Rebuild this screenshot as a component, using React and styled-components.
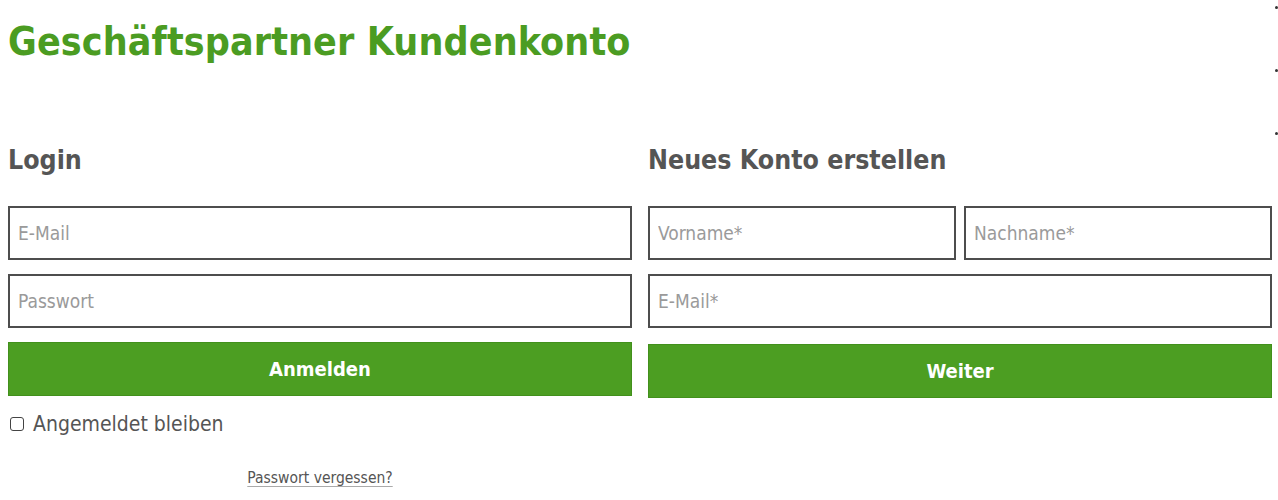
import React from 'react'
import styled, { createGlobalStyle } from 'styled-components'

const Global = createGlobalStyle`
  body {
    margin: 0;
    background: #fff;
    font-family: 'DejaVu Sans Condensed', 'Liberation Sans Narrow', 'Open Sans', sans-serif;
    color: #555;
  }
`

const Page = styled.div`
  position: relative;
  width: 1278px;
  height: 500px;
  overflow: hidden;
  padding: 0 6px 0 8px;
  box-sizing: border-box;
`

const Title = styled.h1`
  margin: 0;
  padding-top: 19px;
  height: 100px;
  box-sizing: border-box;
  font-size: 39px;
  font-weight: 700;
  color: #4b9c22;
  letter-spacing: 0.1px;
  line-height: 46px;
`

const Columns = styled.div`
  display: grid;
  grid-template-columns: 1fr 1fr;
  column-gap: 16px;
`

const Column = styled.section`
  display: flex;
  flex-direction: column;
`

const Heading = styled.h2`
  margin: 42px 0 0;
  height: 64px;
  font-size: 26.5px;
  font-weight: 700;
  color: #555;
  line-height: 36px;
`

const Row = styled.div`
  display: flex;
  gap: 8px;
  margin-bottom: ${p => p.$mb || 14}px;
`

const Input = styled.input`
  flex: 1;
  min-width: 0;
  height: 54px;
  box-sizing: border-box;
  border: 2px solid #4d4d4d;
  border-radius: 0;
  padding: 0 8px;
  font-family: inherit;
  font-size: 19px;
  color: #555;
  outline: none;
  &::placeholder {
    color: #9a9a9a;
  }
`

const Button = styled.button`
  height: 54px;
  margin-top: ${p => p.$mt || 0}px;
  border: 1px solid #42901c;
  background: #4c9e22;
  color: #fff;
  font-family: inherit;
  font-size: 20px;
  font-weight: 700;
  cursor: pointer;
`

const Remember = styled.label`
  display: flex;
  align-items: center;
  gap: 9px;
  margin-top: 16px;
  padding-left: 2px;
  font-size: 21px;
  color: #555;
`

const Box = styled.span`
  width: 14px;
  height: 14px;
  box-sizing: border-box;
  border: 1.5px solid #444;
  border-radius: 3px;
`

const Forgot = styled.a`
  align-self: center;
  margin-top: 33px;
  font-size: 15.5px;
  color: #555;
  text-decoration: underline;
  text-decoration-color: #aaa;
  text-underline-offset: 3px;
`

const Dots = styled.div`
  position: absolute;
  right: 0;
  top: 6px;
  display: flex;
  flex-direction: column;
  gap: 60px;
`

const Dot = styled.span`
  width: 3px;
  height: 3px;
  border-radius: 50%;
  background: #333;
`

export default function App() {
  return (
    <>
      <Global />
      <Page>
        <Title>Geschäftspartner Kundenkonto</Title>
        <Columns>
          <Column>
            <Heading>Login</Heading>
            <Row><Input placeholder="E-Mail" /></Row>
            <Row><Input type="password" placeholder="Passwort" /></Row>
            <Button>Anmelden</Button>
            <Remember><Box />Angemeldet bleiben</Remember>
            <Forgot href="#">Passwort vergessen?</Forgot>
          </Column>
          <Column>
            <Heading>Neues Konto erstellen</Heading>
            <Row>
              <Input placeholder="Vorname*" />
              <Input placeholder="Nachname*" />
            </Row>
            <Row><Input placeholder="E-Mail*" /></Row>
            <Button $mt={2}>Weiter</Button>
          </Column>
        </Columns>
        <Dots><Dot /><Dot /><Dot /></Dots>
      </Page>
    </>
  )
}
